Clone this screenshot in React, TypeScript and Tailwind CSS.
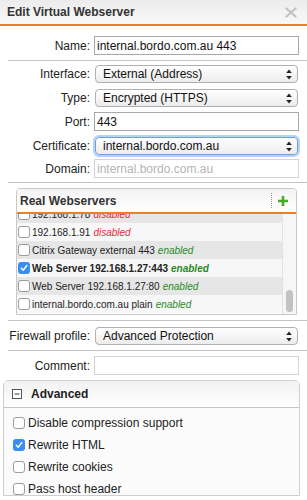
import React from "react";

const font = { fontFamily: '"Liberation Sans", Arial, sans-serif' };

function Arrows() {
  return (
    <svg width="6" height="11" viewBox="0 0 6 11" className="shrink-0">
      <path d="M3 0.5 L5.8 4 L0.2 4 Z" fill="#222" />
      <path d="M3 10.5 L5.8 7 L0.2 7 Z" fill="#222" />
    </svg>
  );
}

function Field({ label, children, mt }: { label: string; children: React.ReactNode; mt: string }) {
  return (
    <div className={`flex items-center ${mt}`}>
      <div className="w-[91px] pr-[1px] text-right text-[12px] text-[#222]">{label}</div>
      <div className="ml-[3px] flex-1 pr-[8px]">{children}</div>
    </div>
  );
}

function TextInput({ value, placeholder }: { value?: string; placeholder?: string }) {
  return (
    <div className={`flex h-[19px] items-center border ${placeholder ? "border-[#d4d4d4]" : "border-[#a9a9a9]"} bg-white pl-[2px] text-[12px]`}>
      {value ? <span className="text-[#111]">{value}</span> : <span className="text-[#b4b4b4]">{placeholder}</span>}
    </div>
  );
}

function Select({ value, focus }: { value: string; focus?: boolean }) {
  return (
    <div
      className={`ml-[1px] mr-[1px] flex h-[18px] items-center justify-between rounded-[4px] border bg-gradient-to-b from-white to-[#ececec] pl-[7px] pr-[5px] text-[12px] text-[#111] ${
        focus ? "border-[#6ea1dc] shadow-[0_0_0_2px_#b8d3f2]" : "border-[#b0b0b0]"
      }`}
    >
      <span>{value}</span>
      <Arrows />
    </div>
  );
}

function Sep({ mt }: { mt: string }) {
  return <div className={`ml-[8px] h-px bg-[#c4c4c4] ${mt}`} />;
}

function Box({ checked, size = 12 }: { checked?: boolean; size?: number }) {
  return checked ? (
    <div className="flex shrink-0 items-center justify-center rounded-[3px] bg-[#3a8ef2]" style={{ width: size, height: size }}>
      <svg width="8" height="8" viewBox="0 0 8 8">
        <path d="M1.3 4.3 L3.2 6.2 L6.8 1.5" fill="none" stroke="white" strokeWidth="1.4" strokeLinecap="round" strokeLinejoin="round" />
      </svg>
    </div>
  ) : (
    <div className="shrink-0 rounded-[3px] border border-[#9d9d9d] bg-white" style={{ width: size, height: size }} />
  );
}

const servers = [
  { name: "192.168.1.78", state: "disabled" },
  { name: "192.168.1.91", state: "disabled" },
  { name: "Citrix Gateway external 443", state: "enabled" },
  { name: "Web Server 192.168.1.27:443", state: "enabled", checked: true },
  { name: "Web Server 192.168.1.27:80", state: "enabled" },
  { name: "internal.bordo.com.au plain", state: "enabled" },
];

export default function App() {
  return (
    <div className="h-[500px] w-[307px] overflow-hidden bg-white" style={font}>
      <div className="flex h-[24px] items-center justify-between bg-gradient-to-b from-[#ececec] to-[#f8f8f8] pl-[7px] pr-[10px]">
        <span className="text-[12px] font-bold text-[#333]">Edit Virtual Webserver</span>
        <svg width="12" height="11" viewBox="0 0 12 11">
          <path d="M1.5 1.5 L10.5 9.5 M10.5 1.5 L1.5 9.5" stroke="#c2c2c2" strokeWidth="2.2" strokeLinecap="round" />
        </svg>
      </div>
      <div className="h-[2px] bg-[#ee8022]" />

      <Field label="Name:" mt="mt-[10px]">
        <TextInput value="internal.bordo.com.au 443" />
      </Field>
      <Sep mt="mt-[5px]" />
      <Field label="Interface:" mt="mt-[4px]">
        <Select value="External (Address)" />
      </Field>
      <Field label="Type:" mt="mt-[6px]">
        <Select value="Encrypted (HTTPS)" />
      </Field>
      <Field label="Port:" mt="mt-[5px]">
        <TextInput value="443" />
      </Field>
      <Field label="Certificate:" mt="mt-[6px]">
        <Select value="internal.bordo.com.au" focus />
      </Field>
      <Field label="Domain:" mt="mt-[4px]">
        <TextInput placeholder="internal.bordo.com.au" />
      </Field>
      <Sep mt="mt-[4px]" />

      <div className="ml-[16px] mr-[10px] mt-[5px] overflow-hidden rounded-t-[4px] border border-[#c8c8c8]">
        <div className="flex h-[23px] items-center justify-between bg-gradient-to-b from-[#f4f4f4] to-white pl-[3px]">
          <span className="text-[12px] font-bold text-[#333]">Real Webservers</span>
          <div className="flex h-full items-center">
            <div className="h-[15px] border-l border-dotted border-[#999]" />
            <svg width="12" height="12" viewBox="0 0 12 12" className="ml-[5px] mr-[7px]">
              <path d="M6 1 V11 M1 6 H11" stroke="#4aaa2a" strokeWidth="2.6" />
            </svg>
          </div>
        </div>
        <div className="h-[2px] bg-[#ee8022]" />
        <div className="flex h-[100px]">
          <div className="flex-1 overflow-hidden">
            <div className="-mt-[9px]">
              {servers.map((s, i) => (
                <div key={s.name} className={`flex h-[18px] items-center pl-[1px] text-[10px] ${i % 2 === 0 ? "bg-[#e6e6e6]" : "bg-[#f7f7f7]"}`}>
                  <Box checked={s.checked} />
                  <span className={`ml-[2px] text-[#222] ${s.checked ? "font-bold" : ""}`}>{s.name}</span>
                  <span
                    className={`ml-[3px] italic ${s.state === "disabled" ? "text-[#f0283c]" : "text-[#2a8a28]"} ${s.checked ? "font-bold" : ""}`}
                  >
                    {s.state}
                  </span>
                </div>
              ))}
            </div>
          </div>
          <div className="relative w-[14px] border-l border-[#e2e2e2] bg-[#f6f6f6]">
            <div className="absolute left-[3px] top-[76px] h-[22px] w-[7px] rounded-full bg-[#c2c2c2]" />
          </div>
        </div>
      </div>

      <Sep mt="mt-[5px]" />
      <Field label="Firewall profile:" mt="mt-[6px]">
        <Select value="Advanced Protection" />
      </Field>
      <Sep mt="mt-[5px]" />
      <Field label="Comment:" mt="mt-[5px]">
        <TextInput value="" placeholder=" " />
      </Field>

      <div className="ml-[3px] mr-[7px] mt-[5px] rounded-t-[5px] border border-[#cfcfcf] bg-[#fbfbfb]">
        <div className="flex h-[27px] items-center border-b border-[#c4c4c4] bg-gradient-to-b from-[#f2f2f2] to-white pl-[8px]">
          <svg width="10" height="10" viewBox="0 0 10 10">
            <rect x="0.5" y="0.5" width="9" height="9" fill="white" stroke="#555" />
            <path d="M2.5 5 H7.5" stroke="#333" strokeWidth="1" />
          </svg>
          <span className="ml-[9px] text-[12px] font-bold text-[#222]">Advanced</span>
        </div>
        <div className="flex flex-col gap-[10px] pl-[9px] pt-[9px] text-[12px] text-[#222]">
          {[
            ["Disable compression support", false],
            ["Rewrite HTML", true],
            ["Rewrite cookies", false],
            ["Pass host header", false],
          ].map(([label, c]) => (
            <div key={label as string} className="flex h-[12px] items-center">
              <Box checked={c as boolean} />
              <span className="ml-[3px]">{label as string}</span>
            </div>
          ))}
        </div>
      </div>
    </div>
  );
}
